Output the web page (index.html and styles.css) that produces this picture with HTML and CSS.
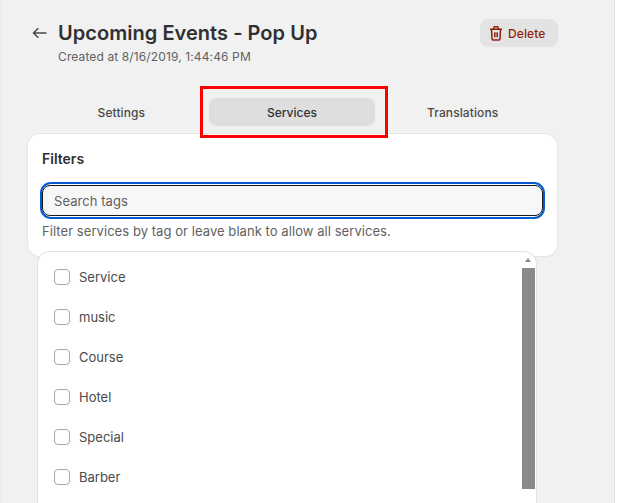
FILE: index.html
```html
<!DOCTYPE html>
<html lang="en">
<head>
<meta charset="utf-8">
<title>Upcoming Events - Pop Up</title>
<link rel="stylesheet" href="styles.css">
</head>
<body>
<main class="page">
  <header class="header">
    <button class="back" aria-label="Back">
      <svg width="16" height="16" viewBox="0 0 16 16" fill="none" stroke="#4a4a4a" stroke-width="1.5"><path d="M15.500 8H2.500M7.300 3.200 2.500 8l4.800 4.800"/></svg>
    </button>
    <div class="heading">
      <h1 class="title">Upcoming Events - Pop Up</h1>
      <p class="subtitle">Created at 8/16/2019, 1:44:46 PM</p>
    </div>
    <button class="delete">
      <svg width="12" height="15" viewBox="0 0 12 15" fill="none" stroke="#8e1f0b" stroke-width="1.500"><path d="M0 3.300h12M3.800 3.300V2c0-.6.400-1.200 1-1.200h2.400c.6 0 1 .6 1 1.200v1.300M1.500 3.300l.5 9.500c0 .8.500 1.300 1.200 1.300h5.600c.7 0 1.200-.5 1.200-1.300l.5-9.500M4.800 6.300v4.900M7.200 6.300v4.900"/></svg>
      <span>Delete</span>
    </button>
  </header>

  <nav class="tabs">
    <button class="tab">Settings</button>
    <button class="tab tab-active">Services</button>
    <button class="tab">Translations</button>
    <span class="highlight"></span>
  </nav>

  <section class="card">
    <h2 class="card-title">Filters</h2>
    <div class="ring"><input class="search" type="text" placeholder="Search tags"></div>
    <p class="help">Filter services by tag or leave blank to allow all services.</p>

    <div class="dropdown">
      <ul class="options">
        <li class="option"><span class="box"></span>Service</li>
        <li class="option"><span class="box"></span>music</li>
        <li class="option"><span class="box"></span>Course</li>
        <li class="option"><span class="box"></span>Hotel</li>
        <li class="option"><span class="box"></span>Special</li>
        <li class="option"><span class="box"></span>Barber</li>
      </ul>
      <div class="scrollbar">
        <span class="arrow"></span>
        <span class="thumb"></span>
      </div>
    </div>
  </section>
</main>
</body>
</html>
```
FILE: styles.css
```css
* { box-sizing: border-box; }
html, body { margin: 0; height: 100%; overflow: hidden; background: #fff; }
body { font-family: Inter, "Liberation Sans", sans-serif; color: #303030; }

.page {
  width: 615px;
  height: 503px;
  background: #f1f1f1;
  border-left: 2px solid #ebebeb;
  border-right: 1px solid #dcdcdc;
  padding: 19px 56px 0 26px;
}

.header { display: flex; align-items: flex-start; height: 67px; }
.back { width: 30px; height: 28px; padding: 0 0 0 3px; margin: 0; border: 0; background: none; display: flex; align-items: center; }
.heading { flex: 1; }
.title { margin: 0; font-size: 20px; line-height: 28px; font-weight: 600; letter-spacing: .04px; color: #303030; }
.subtitle { margin: 1px 0 0; font-size: 12px; line-height: 18px; letter-spacing: .12px; color: #616161; }
.delete {
  display: flex; align-items: center; gap: 6px;
  width: 78px; height: 28px; padding: 0 0 0 10px;
  border: 0; border-radius: 8px; background: #e3e3e3;
  font: 500 12px Inter, sans-serif; letter-spacing: .1px; color: #8e1f0b;
}

.tabs { position: relative; display: grid; grid-template-columns: repeat(3, 1fr); gap: 4px; height: 48px; padding: 12px 12px 0 10px; }
.tab { height: 28px; padding: 0; border: 0; border-radius: 8px; background: none; font: 500 12px Inter, sans-serif; letter-spacing: .1px; color: #4a4a4a; }
.tab-active { background: #dedede; color: #303030; letter-spacing: 0; }
.highlight { position: absolute; z-index: 2; left: 172px; top: 0; width: 188px; height: 52px; border: 3px solid #f00; }

.card {
  position: relative;
  width: 529px; height: 122px;
  padding: 15px 14px 0;
  background: #fff;
  border-radius: 12px;
  box-shadow: 0 0 0 1px #e6e6e6, 0 1px 1px rgba(0,0,0,.08);
}
.card-title { margin: 0; height: 20px; font-size: 14px; line-height: 20px; font-weight: 600; color: #303030; }
.ring { margin: 13px 0 0 -2px; width: 505px; height: 37px; padding: 1px 0; border-radius: 11px; background: #fff; border: 2px solid #005bd3; }
.search {
  display: block; width: 100%; height: 100%; padding: 0 11px;
  border: 1px solid #1a1a1a; border-radius: 8px; outline: 0; background: #f7f7f7;
  font: 400 13px Inter, sans-serif; letter-spacing: .06px; color: #303030;
}
.search::placeholder { color: #616161; opacity: 1; }
.help { margin: 4px 0 0; font-size: 13px; line-height: 16px; letter-spacing: .06px; color: #616161; }

.dropdown {
  position: absolute; left: 10px; top: 118px;
  width: 498px; height: 260px;
  display: flex;
  background: #fff; border-radius: 12px 12px 0 0;
  box-shadow: 0 0 0 1px #e3e3e3;
  overflow: hidden;
}
.options { flex: 1; margin: 0; padding: 5px 0 0 16px; list-style: none; }
.option { display: flex; align-items: center; gap: 9px; height: 40px; font-size: 13px; color: #4a4a4a; }
.box { width: 16px; height: 16px; border: 1px solid #a8a8a8; border-radius: 4px; background: #fff; }

.scrollbar { position: relative; width: 14px; padding-right: 1px; }
.arrow { position: absolute; left: 3px; top: 6px; width: 0; height: 0; border: 3.500px solid transparent; border-top: 0; border-bottom: 4px solid #8a8a8a; }
.thumb { position: absolute; left: 0; top: 16px; width: 13px; height: 221px; background: #8a8a8a; }
```
